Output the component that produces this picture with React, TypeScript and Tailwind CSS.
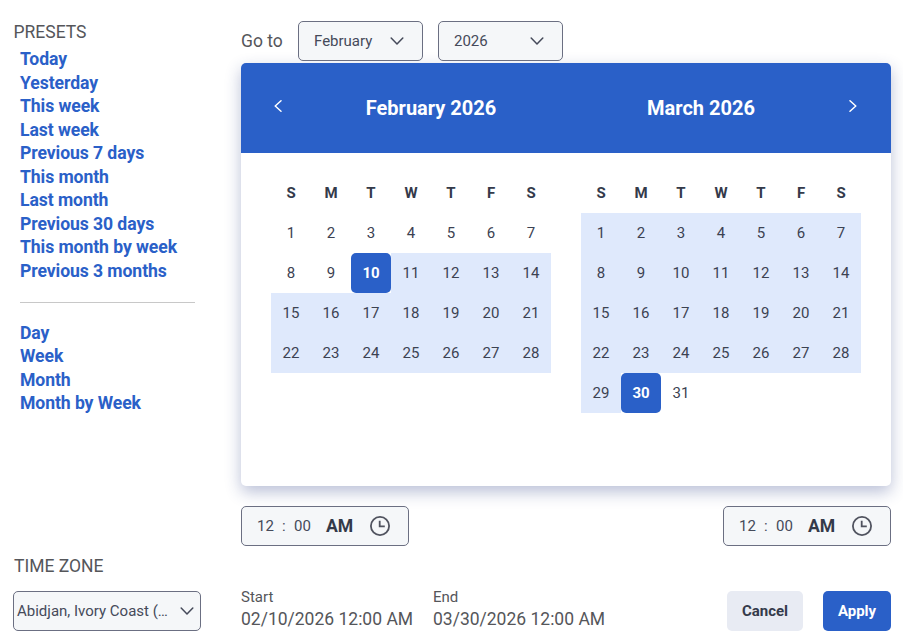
import type { ReactNode } from "react";

const presets = [
  "Today",
  "Yesterday",
  "This week",
  "Last week",
  "Previous 7 days",
  "This month",
  "Last month",
  "Previous 30 days",
  "This month by week",
  "Previous 3 months",
];
const intervals = ["Day", "Week", "Month", "Month by Week"];
const weekdays = ["S", "M", "T", "W", "T", "F", "S"];

function Chevron({ className }: { className: string }) {
  return (
    <svg className={className} viewBox="0 0 14 8" fill="none" stroke="currentColor" strokeWidth="1.5" strokeLinecap="round" strokeLinejoin="round">
      <path d="M1.2 1 L7 7 L12.8 1" />
    </svg>
  );
}

function Select({ className, children }: { className: string; children: ReactNode }) {
  return (
    <button className={`flex h-10 items-center justify-between rounded-[5px] border border-[#6b6f82] bg-[#f5f7f9] text-left text-[15px] text-[#454a5a] ${className}`}>
      <span>{children}</span>
      <Chevron className="h-2 w-3.5 shrink-0 text-[#454a5a]" />
    </button>
  );
}

function LinkList({ items }: { items: string[] }) {
  return (
    <ul className="text-[17.6px] leading-[23.5px] font-bold tracking-[-0.08px] text-[#2a60c8]">
      {items.map((item) => (
        <li key={item}>{item}</li>
      ))}
    </ul>
  );
}

function Month({ days, start, end, selected }: { days: number; start: number; end: number; selected: number }) {
  return (
    <div className="grid w-[280px] grid-cols-7 content-start text-center text-[15px] leading-10 text-[#3c4252]">
      {weekdays.map((day, i) => (
        <div key={i} className="h-10 font-bold text-[#343a4a]">{day}</div>
      ))}
      {Array.from({ length: days }, (_, i) => i + 1).map((day) => {
        if (day === selected) {
          return (
            <div key={day} className="h-10 rounded-[5px] bg-[#2a60c8] font-bold text-white">{day}</div>
          );
        }
        return (
          <div key={day} className={day >= start && day <= end ? "h-10 bg-[#dfe9fc]" : "h-10"}>{day}</div>
        );
      })}
    </div>
  );
}

function TimeField() {
  return (
    <div className="flex h-10 w-[168px] items-center rounded-[5px] border border-[#6b6f82] bg-[#f5f7f9] pl-[15px] text-[15px] text-[#454a5a]">
      <span className="w-[25px]">12</span>
      <span className="w-3">:</span>
      <span className="w-8">00</span>
      <span className="w-11 pb-px text-[17.6px] leading-6 font-bold text-[#343a4a]">AM</span>
      <svg className="h-5 w-5" viewBox="0 0 20 20" fill="none" stroke="#50535f" strokeWidth="1.8">
        <circle cx="10" cy="10" r="9.1" />
        <path d="M9.7 4.8 V10.3 H14.8" />
      </svg>
    </div>
  );
}

function Summary({ label, value }: { label: string; value: string }) {
  return (
    <div className="w-48 pt-px text-[#55565a]">
      <div className="text-[15px] leading-5">{label}</div>
      <div className="text-[17.5px] leading-6">{value}</div>
    </div>
  );
}

export default function App() {
  return (
    <div className="flex h-[641px] w-[903px] overflow-hidden bg-white font-['Roboto',sans-serif]">
      <aside className="flex w-[241px] shrink-0 flex-col">
        <h2 className="mt-5 pl-[13.5px] text-[17.5px] leading-6 text-[#55565a]">PRESETS</h2>
        <nav className="mt-1 ml-5 w-[175px]">
          <LinkList items={presets} />
          <hr className="mt-[19px] mb-[18.5px] border-[#c8c8c8]" />
          <LinkList items={intervals} />
        </nav>
        <div className="mt-auto pb-[10px] pl-[13px]">
          <h2 className="mb-[13px] pl-px text-[17.5px] leading-6 text-[#55565a]">TIME ZONE</h2>
          <Select className="w-[188px] pr-[6px] pl-[3px]">Abidjan, Ivory Coast (…</Select>
        </div>
      </aside>
      <main className="w-[650px]">
        <div className="flex items-center pt-[21px]">
          <span className="w-[57px] pb-px text-[17.5px] leading-6 text-[#55565a]">Go to</span>
          <Select className="mr-[15px] w-[125px] pr-[18px] pl-[15px]">February</Select>
          <Select className="w-[125px] pr-[18px] pl-[15px]">2026</Select>
        </div>
        <section className="mt-[2px] h-[423px] overflow-hidden rounded-[5px] bg-white shadow-[0_6px_16px_rgba(40,60,130,0.32)]">
          <header className="flex h-[90px] items-center bg-[#2a60c8] text-[20px] font-bold text-white">
            <button className="w-10 pl-[33px]" aria-label="Previous month">
              <svg className="mb-1 h-3 w-2" viewBox="0 0 8 12" fill="none" stroke="currentColor" strokeWidth="1.5" strokeLinecap="round" strokeLinejoin="round">
                <path d="M7 .8 L1.2 6 L7 11.2" />
              </svg>
            </button>
            <h3 className="w-[300px] text-center">February 2026</h3>
            <h3 className="w-[240px] text-center">March 2026</h3>
            <button aria-label="Next month">
              <svg className="mb-1 ml-7 h-3 w-2" viewBox="0 0 8 12" fill="none" stroke="currentColor" strokeWidth="1.5" strokeLinecap="round" strokeLinejoin="round">
                <path d="M1 .8 L6.8 6 L1 11.2" />
              </svg>
            </button>
          </header>
          <div className="flex gap-[30px] px-[30px] pt-5">
            <Month days={28} start={10} end={28} selected={10} />
            <Month days={31} start={1} end={30} selected={30} />
          </div>
        </section>
        <div className="mt-5 flex justify-between">
          <TimeField />
          <TimeField />
        </div>
        <footer className="mt-10 flex">
          <Summary label="Start" value="02/10/2026 12:00 AM" />
          <Summary label="End" value="03/30/2026 12:00 AM" />
          <div className="mt-[5px] ml-auto flex gap-5 text-[15px] font-bold">
            <button className="h-10 w-[76px] rounded-[5px] bg-[#e8ebf3] text-[#343a4a]">Cancel</button>
            <button className="h-10 w-[68px] rounded-[5px] bg-[#2a60c8] text-white">Apply</button>
          </div>
        </footer>
      </main>
    </div>
  );
}
